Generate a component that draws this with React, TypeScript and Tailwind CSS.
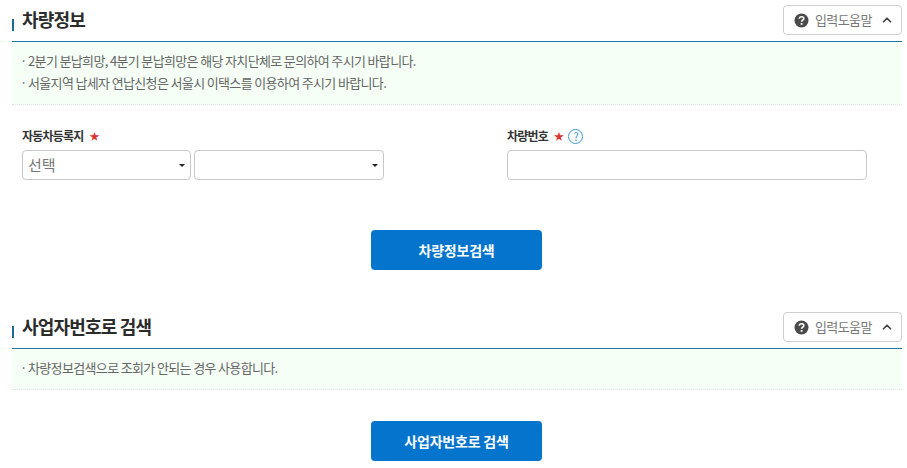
import { ChevronUp } from "lucide-react"

const font = { fontFamily: '"Noto Sans CJK KR", "Noto Sans", sans-serif' }

function HelpIcon() {
  return (
    <svg width="15" height="15" viewBox="0 0 15 15" className="shrink-0">
      <circle cx="7.5" cy="7.5" r="7" fill="#4a4a4a" />
      <path d="M5.3 5.8c0-1.3 1-2.1 2.3-2.1s2.2.8 2.2 1.9c0 1.7-2.2 1.6-2.2 3.2" fill="none" stroke="#fff" strokeWidth="1.6" />
      <rect x="6.7" y="10" width="1.8" height="1.8" fill="#fff" />
    </svg>
  )
}

function SectionHead({ title }: { title: string }) {
  return (
    <div className="flex h-[41px] items-start justify-between">
      <div className="flex items-end">
        <span className="mb-[7px] h-[12px] w-[2px] bg-[#1d6a96]" />
        <h2 className="ml-2 text-[18px] font-bold leading-[38px] tracking-[-0.8px] text-[#2b2b2b]">{title}</h2>
      </div>
      <button className="mt-[5px] flex h-[30px] w-[119px] items-center rounded-[4px] border border-[#cfcfcf] bg-white pl-[10px] text-[13px] tracking-[-0.6px] text-[#777]">
        <HelpIcon />
        <span className="ml-[6px]">입력도움말</span>
        <ChevronUp size={14} strokeWidth={3} className="ml-[8px] text-[#444]" />
      </button>
    </div>
  )
}

function Notice({ lines }: { lines: string[] }) {
  return (
    <div className="border-t border-[#1b78a8]">
      <div className="border-b border-dotted border-[#e4e4e4] bg-[#f5fff6] px-[10px] pb-[10px] pt-2 text-[13px] leading-[22px] tracking-[-0.65px] text-[#666]">
        {lines.map((line) => (
          <p key={line}>
            <span className="-ml-[2px] inline-block w-2">·</span>
            {line}
          </p>
        ))}
      </div>
    </div>
  )
}

function Select({ value, className }: { value?: string; className: string }) {
  return (
    <div className={`flex h-[30px] items-center justify-between rounded-[4px] border border-[#c8c8c8] bg-white pl-[5px] pr-[5px] text-[15px] text-[#777] ${className}`}>
      <span>{value}</span>
      <span className="h-0 w-0 border-x-[3px] border-t-[3px] border-x-transparent border-t-[#222]" />
    </div>
  )
}

function Label({ text, help }: { text: string; help?: boolean }) {
  return (
    <div className="flex h-[20px] items-center text-[12px] font-bold tracking-[-0.8px] text-[#333]">
      <span>{text}</span>
      <span className="ml-[6px] text-[10px] leading-none text-[#d9362f]">★</span>
      {help && (
        <span className="ml-[5px] flex h-[15px] w-[15px] items-center justify-center rounded-full border border-[#3d98d3] text-[11px] font-normal text-[#3d98d3]">
          ?
        </span>
      )}
    </div>
  )
}

function SearchButton({ text }: { text: string }) {
  return (
    <button className="flex h-[40px] w-[171px] items-center justify-center rounded-[4px] bg-[#0474cd] text-[14px] font-bold tracking-[-0.2px] text-white">
      {text}
    </button>
  )
}

export default function App() {
  return (
    <div className="h-[468px] w-[907px] overflow-hidden bg-white pl-3 pr-[5px]" style={font}>
      <SectionHead title="차량정보" />
      <Notice
        lines={[
          "2분기 분납희망, 4분기 분납희망은 해당 자치단체로 문의하여 주시기 바랍니다.",
          "서울지역 납세자 연납신청은 서울시 이택스를 이용하여 주시기 바랍니다.",
        ]}
      />
      <div className="mt-[21px] flex pl-[10px]">
        <div className="w-[485px]">
          <Label text="자동차등록지" />
          <div className="mt-1 flex gap-[3px]">
            <Select value="선택" className="w-[169px]" />
            <Select className="w-[190px]" />
          </div>
        </div>
        <div>
          <Label text="차량번호" help />
          <div className="mt-1 h-[30px] w-[360px] rounded-[4px] border border-[#c8c8c8] bg-white" />
        </div>
      </div>
      <div className="mt-[50px] flex justify-center pr-px">
        <SearchButton text="차량정보검색" />
      </div>
      <div className="mt-[37px]">
        <SectionHead title="사업자번호로 검색" />
      </div>
      <Notice lines={["차량정보검색으로 조회가 안되는 경우 사용합니다."]} />
      <div className="mt-[31px] flex justify-center pr-px">
        <SearchButton text="사업자번호로 검색" />
      </div>
    </div>
  )
}
